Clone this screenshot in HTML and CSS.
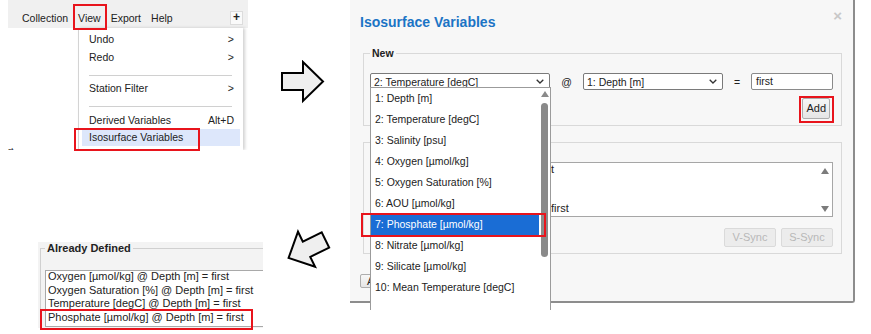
FILE: index.html
```html
<html>
<head>
<link rel="stylesheet" href="styles.css">
</head>
<body>
<div class="canvas">

    <!-- View menu -->
    <div class="shot menu-shot">
        <div class="menubar">
            <span>Collection</span>
            <span>View</span>
            <span>Export</span>
            <span>Help</span>
            <span class="menubar-plus">+</span>
        </div>
        <div class="menu-area">
            <div class="stray"><span>rt</span></div>
            <div class="menu">
                <div class="menu-row"><span>Undo</span><span>&gt;</span></div>
                <div class="menu-row"><span>Redo</span><span>&gt;</span></div>
                <div class="menu-sep"></div>
                <div class="menu-row"><span>Station Filter</span><span>&gt;</span></div>
                <div class="menu-sep"></div>
                <div class="menu-row"><span>Derived Variables</span><span>Alt+D</span></div>
                <div class="menu-row active"><span>Isosurface Variables</span></div>
            </div>
        </div>
    </div>

    <svg class="arrow arrow-next" width="46" height="44" viewBox="0 0 46 44">
        <polygon points="2,13 23,13 23,2 43,21.5 23,41 23,30 2,30"/>
    </svg>

    <!-- Isosurface dialog -->
    <div class="shot dialog">
        <div class="dialog-head">
            <span class="dialog-title">Isosurface Variables</span>
            <span class="dialog-close">&times;</span>
        </div>

        <fieldset class="group">
            <legend>New</legend>
            <div class="new-row">
                <div class="select select-var">
                    <span>2: Temperature [degC]</span>
                    <svg width="8" height="5" viewBox="0 0 8 5"><path d="M0.7 0.7 L4 4 L7.3 0.7"/></svg>
                </div>
                <span class="at">@</span>
                <div class="select select-depth">
                    <span>1: Depth [m]</span>
                    <svg width="8" height="5" viewBox="0 0 8 5"><path d="M0.7 0.7 L4 4 L7.3 0.7"/></svg>
                </div>
                <span class="eq">=</span>
                <div class="text-input">first</div>
            </div>
            <div class="add-row">
                <span class="btn">Add</span>
            </div>
        </fieldset>

        <fieldset class="group group-defined">
            <legend>Already Defined</legend>
            <div class="define-box">
                <div class="define-lines">
                    <div>Oxygen [µmol/kg] @ Depth [m] = first</div>
                    <div>Salinity [psu] @ Depth [m] = first</div>
                    <div>AOU [µmol/kg] @ Depth [m] = first</div>
                    <div>Phosphate [µmol/kg] @ Depth [m] = first</div>
                </div>
                <div class="define-scroll">
                    <span class="tri-up"></span>
                    <span class="tri-down"></span>
                </div>
            </div>
            <div class="sync-row">
                <span class="btn btn-off">V-Sync</span>
                <span class="btn btn-off">S-Sync</span>
            </div>
        </fieldset>

        <div class="apply-row">
            <span class="btn">Apply</span>
        </div>

        <!-- open dropdown of the first select -->
        <div class="dropdown">
            <ul class="options">
                <li>1: Depth [m]</li>
                <li>2: Temperature [degC]</li>
                <li>3: Salinity [psu]</li>
                <li>4: Oxygen [µmol/kg]</li>
                <li>5: Oxygen Saturation [%]</li>
                <li>6: AOU [µmol/kg]</li>
                <li class="picked">7: Phosphate [µmol/kg]</li>
                <li>8: Nitrate [µmol/kg]</li>
                <li>9: Silicate [µmol/kg]</li>
                <li>10: Mean Temperature [degC]</li>
            </ul>
            <div class="options-scroll">
                <span class="tri-up"></span>
                <span class="thumb"></span>
            </div>
        </div>
    </div>

    <svg class="arrow arrow-back" width="60" height="60" viewBox="0 0 60 60">
        <g transform="translate(30 30) rotate(154)">
            <polygon points="-20.5,-8.5 0.5,-8.5 0.5,-19.5 20.5,0 0.5,19.5 0.5,8.5 -20.5,8.5"/>
        </g>
    </svg>

    <!-- Already defined result -->
    <div class="shot defined-shot">
        <fieldset class="defined-group">
            <legend>Already Defined</legend>
            <div class="defined-box">
                <div>Oxygen [µmol/kg] @ Depth [m] = first</div>
                <div>Oxygen Saturation [%] @ Depth [m] = first</div>
                <div>Temperature [degC] @ Depth [m] = first</div>
                <div>Phosphate [µmol/kg] @ Depth [m] = first</div>
            </div>
        </fieldset>
    </div>

    <!-- red callouts -->
    <div class="mark mark-view"></div>
    <div class="mark mark-iso"></div>
    <div class="mark mark-add"></div>
    <div class="mark mark-phos"></div>
    <div class="mark mark-defined"></div>
</div>
</body>
</html>
```

FILE: styles.css
```css
* {
    margin: 0;
    padding: 0;
    box-sizing: border-box;
}

body {
    background: #fff;
    font-family: "Liberation Sans", Arial, sans-serif;
    color: #222;
}

.canvas {
    position: relative;
    width: 871px;
    height: 334px;
    overflow: hidden;
}

.shot {
    position: absolute;
}

/* View menu */
.menu-shot {
    left: 8px;
    top: 0;
    width: 240px;
    height: 150px;
    overflow: hidden;
    display: flex;
    flex-direction: column;
    font-size: 10.5px;
}

.menubar {
    height: 28px;
    flex: none;
    display: flex;
    align-items: center;
    gap: 10px;
    padding: 7px 5px 0 14px;
    background: #f0f0f0;
}

.menubar-plus {
    margin-left: auto;
    width: 13px;
    height: 14px;
    border: 1px solid #dcdcdc;
    background: #fafafa;
    font-weight: bold;
    font-size: 12px;
    line-height: 11px;
    text-align: center;
}

.menu-area {
    flex: 1;
    display: flex;
}

.stray {
    width: 70px;
    display: flex;
    align-items: flex-end;
    overflow: hidden;
    font-size: 9px;
}

.stray span {
    margin-bottom: -6px;
}

.menu {
    width: 165px;
    padding-top: 2.5px;
    background: #fff;
    border-left: 1px solid #d4d4d4;
    box-shadow: 2px 0 3px rgba(0, 0, 0, 0.18);
}

.menu-row {
    height: 17.5px;
    display: flex;
    align-items: center;
    justify-content: space-between;
    margin: 0 3px;
    padding: 0 6px 0 7px;
}

.menu-row.active {
    background: #dde7fb;
}

.menu-sep {
    height: 1px;
    margin: 9px 11px 4px 10px;
    background: #d0d0d0;
}

/* arrows */
.arrow {
    position: absolute;
}

.arrow polygon {
    fill: #efefef;
    stroke: #000;
    stroke-width: 2;
}

.arrow-next {
    left: 280px;
    top: 60px;
}

.arrow-back {
    left: 277px;
    top: 219px;
}

/* dialog */
.dialog {
    left: 350px;
    top: 0;
    width: 505px;
    height: 303px;
    background: #f7f7f7;
    border-right: 2px solid #8d8d8d;
    border-bottom: 2px solid #8d8d8d;
    border-bottom-right-radius: 3px;
    font-size: 10.5px;
}

.dialog-head {
    display: flex;
    justify-content: space-between;
    padding: 13px 11px 0 10px;
}

.dialog-title {
    font-weight: bold;
    font-size: 14px;
    line-height: 18px;
    color: #1b74c5;
}

.dialog-close {
    margin-top: -4px;
    font-size: 15px;
    font-weight: bold;
    line-height: 14px;
    color: #c8c8c8;
}

.group {
    margin: 16px 11px 0 13px;
    padding: 14px 8px 6px 6px;
    border: 1px solid #d9d9d9;
}

.group legend {
    padding: 0 2px;
    font-weight: bold;
    font-size: 10.5px;
    line-height: 12px;
}

.new-row {
    display: flex;
    align-items: center;
}

.select {
    height: 17px;
    display: flex;
    align-items: center;
    justify-content: space-between;
    padding: 0 5px 0 3px;
    background: #fff;
    border: 1px solid #7a7a7a;
    border-radius: 2px;
}

.select path {
    fill: none;
    stroke: #333;
    stroke-width: 1.3;
}

.select-var { width: 180px; }
.select-depth { width: 140px; }

.at {
    width: 33px;
    text-align: center;
}

.eq {
    width: 28px;
    text-align: center;
}

.text-input {
    width: 82px;
    height: 17px;
    padding-left: 4px;
    line-height: 15px;
    background: #fff;
    border: 1px solid #8a8a8a;
    border-radius: 2px;
}

.add-row {
    display: flex;
    justify-content: flex-end;
    margin-top: 8px;
    padding-right: 3px;
}

.btn {
    height: 21px;
    padding: 0 3px;
    line-height: 19px;
    font-size: 11px;
    background: linear-gradient(#f7f7f7, #e5e5e5);
    border: 1px solid #adadad;
    border-radius: 2px;
}

.group-defined {
    margin-top: 10px;
}

.define-box {
    height: 55px;
    display: flex;
    background: #fff;
    border: 1px solid #a6a6a6;
    font-size: 11px;
}

.define-lines {
    flex: 1;
    padding-left: 2px;
    line-height: 13px;
    white-space: nowrap;
    overflow: hidden;
}

.define-scroll {
    width: 14px;
    display: flex;
    flex-direction: column;
    justify-content: space-between;
    align-items: center;
    padding: 5px 0 4px;
}

.tri-up {
    width: 0;
    height: 0;
    border-left: 4px solid transparent;
    border-right: 4px solid transparent;
    border-bottom: 6px solid #7c7c7c;
}

.tri-down {
    width: 0;
    height: 0;
    border-left: 4px solid transparent;
    border-right: 4px solid transparent;
    border-top: 6px solid #7c7c7c;
}

.sync-row {
    display: flex;
    justify-content: flex-end;
    gap: 5px;
    margin-top: 11px;
}

.btn-off {
    width: 52px;
    height: 19px;
    line-height: 17px;
    text-align: center;
    color: #b8b8b8;
    background: #ececec;
    border-color: #dadada;
}

.apply-row {
    margin-top: 19px;
    padding-left: 10px;
}

.apply-row .btn {
    height: 19px;
    line-height: 17px;
    padding: 0 6px;
}

.dropdown {
    position: absolute;
    left: 20px;
    top: 87px;
    width: 181px;
    height: 223px;
    display: flex;
    background: #fff;
    border: 1px solid #9b9b9b;
    border-bottom: none;
}

.options {
    flex: 1;
    list-style: none;
}

.options li {
    height: 21px;
    padding-left: 4px;
    line-height: 21px;
    white-space: nowrap;
}

.options li.picked {
    background: #1a6dd5;
    color: #fff;
}

.options-scroll {
    width: 11px;
    display: flex;
    flex-direction: column;
    align-items: center;
    padding-top: 3px;
}

.options-scroll .tri-up {
    border-bottom-color: #8a8a8a;
}

.thumb {
    width: 7px;
    height: 154px;
    margin-top: 6px;
    background: #8a8a8a;
    border-radius: 4px;
}

/* already defined */
.defined-shot {
    left: 38px;
    top: 242px;
    width: 225px;
    height: 86px;
    overflow: hidden;
    background: #f3f3f3;
}

.defined-group {
    margin-left: 2px;
    width: 240px;
    padding: 15px 0 0 4px;
    border: 1px solid #d0d0d0;
    border-right: none;
    border-bottom: none;
}

.defined-group legend {
    padding: 0 2px;
    font-weight: bold;
    font-size: 11px;
    line-height: 13px;
}

.defined-box {
    height: 57px;
    padding-left: 2px;
    font-size: 11px;
    line-height: 13.5px;
    white-space: nowrap;
    background: #fff;
    border: 1px solid #a9a9a9;
    border-right: none;
}

.defined-box div:first-child {
    margin-top: -1px;
}

/* red callouts */
.mark {
    position: absolute;
    border: 2px solid #e8141c;
}

.mark-view { left: 73px; top: 4px; width: 34px; height: 26px; }
.mark-iso { left: 74px; top: 128px; width: 126px; height: 23px; }
.mark-add { left: 799px; top: 96px; width: 35px; height: 27px; }
.mark-phos { left: 361px; top: 213px; width: 185px; height: 24px; }
.mark-defined { left: 40px; top: 309px; width: 213px; height: 21px; }
```
